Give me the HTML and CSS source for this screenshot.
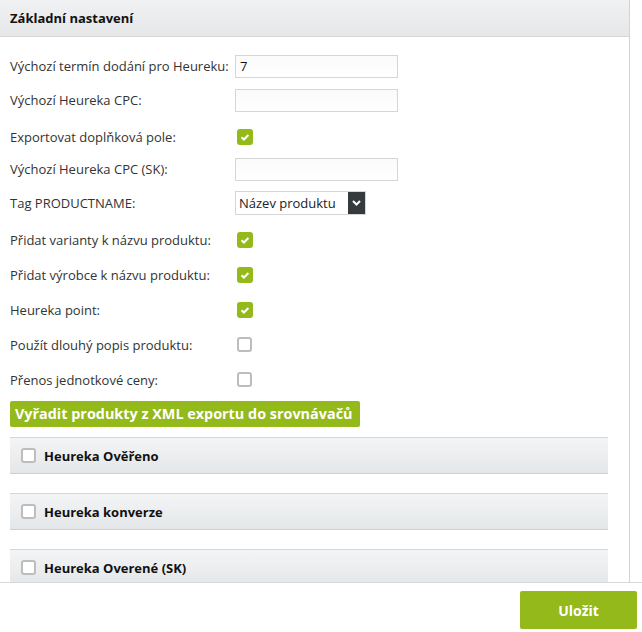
FILE: index.html
```html
<!DOCTYPE html>
<html lang="cs">
<head>
    <meta charset="UTF-8">
    <meta name="viewport" content="width=device-width, initial-scale=1.0">
    <title>Heureka - nastavení</title>
    <link rel="stylesheet" href="styles.css">
</head>
<body>
    <div class="scroll">
        <div class="panel">
            <div class="panel-head">Základní nastavení</div>

            <div class="panel-body">
                <div class="row">
                    <label>Výchozí termín dodání pro Heureku:</label>
                    <input type="text" class="field" value="7">
                </div>
                <div class="row">
                    <label>Výchozí Heureka CPC:</label>
                    <input type="text" class="field">
                </div>
                <div class="row check">
                    <label>Exportovat doplňková pole:</label>
                    <span class="box on"></span>
                </div>
                <div class="row">
                    <label>Výchozí Heureka CPC (SK):</label>
                    <input type="text" class="field">
                </div>
                <div class="row">
                    <label>Tag PRODUCTNAME:</label>
                    <div class="select">
                        <span class="select-value">Název produktu</span>
                        <span class="select-arrow">
                            <svg width="9" height="6" viewBox="0 0 9 6"><path d="M1 1l3.5 3.5L8 1" fill="none" stroke="#fff" stroke-width="2"/></svg>
                        </span>
                    </div>
                </div>
                <div class="row check">
                    <label>Přidat varianty k názvu produktu:</label>
                    <span class="box on"></span>
                </div>
                <div class="row check">
                    <label>Přidat výrobce k názvu produktu:</label>
                    <span class="box on"></span>
                </div>
                <div class="row check">
                    <label>Heureka point:</label>
                    <span class="box on"></span>
                </div>
                <div class="row check">
                    <label>Použít dlouhý popis produktu:</label>
                    <span class="box"></span>
                </div>
                <div class="row check">
                    <label>Přenos jednotkové ceny:</label>
                    <span class="box"></span>
                </div>

                <div class="banner">Vyřadit produkty z XML exportu do srovnávačů</div>

                <div class="item"><span class="box"></span>Heureka Ověřeno</div>
                <div class="item"><span class="box"></span>Heureka konverze</div>
                <div class="item"><span class="box"></span>Heureka Overené (SK)</div>
            </div>
        </div>
    </div>

    <div class="footer">
        <button type="button" class="save">Uložit</button>
    </div>
</body>
</html>
```

FILE: styles.css
```css
body {
    font-family: "Open Sans", Arial, sans-serif;
    font-size: 13px;
    color: #333;
    margin: 0;
    background: #fff;
}

.scroll {
    height: 582px;
    overflow: hidden;
}

.panel {
    width: 629px;
    border-right: 1px solid #d3d3d3;
    min-height: 582px;
}

.panel-head {
    height: 36px;
    line-height: 36px;
    padding-left: 10px;
    font-weight: bold;
    color: #111;
    background: linear-gradient(#f0f1f2, #e5e7e9);
    border-bottom: 1px solid #d4d6d8;
}

.panel-body {
    padding: 12px 0 0 10px;
}

.row {
    display: flex;
    align-items: center;
    height: 34px;
}

.row.check {
    height: 35px;
    box-sizing: border-box;
    padding-top: 4px;
}

.row label {
    width: 225px;
    flex: none;
}

.field {
    width: 163px;
    height: 23px;
    box-sizing: border-box;
    border: 1px solid #d6d6d6;
    background: linear-gradient(#fafafa, #fff);
    font-family: inherit;
    font-size: 13px;
    color: #111;
    padding: 0 4px;
    outline: none;
}

.select {
    display: flex;
    width: 131px;
    height: 24px;
    box-sizing: border-box;
    border: 1px solid #d6d6d6;
    color: #222;
}

.select-value {
    flex: 1;
    line-height: 22px;
    padding-left: 3px;
}

.select-arrow {
    width: 17px;
    background: #353a3d;
    display: flex;
    align-items: center;
    justify-content: center;
}

.box {
    width: 15px;
    height: 15px;
    box-sizing: border-box;
    border: 2px solid #bdbdbd;
    border-radius: 3px;
    background: #fff;
    margin-left: 2px;
    flex: none;
}

.box.on {
    width: 16px;
    height: 16px;
    border: none;
    background: #93b91b url("data:image/svg+xml,%3Csvg xmlns='http://www.w3.org/2000/svg' width='16' height='16'%3E%3Cpath d='M4.5 8.2l2.4 2.3 4.5-4.5' fill='none' stroke='white' stroke-width='2'/%3E%3C/svg%3E") no-repeat center;
}

.banner {
    display: inline-block;
    box-sizing: border-box;
    margin-top: 6px;
    height: 26px;
    line-height: 26px;
    padding: 0 5px;
    width: 350px;
    white-space: nowrap;
    background: #93b91b;
    color: #fff;
    font-weight: bold;
    font-size: 14.4px;
    border-radius: 2px;
}

.item {
    display: flex;
    align-items: center;
    gap: 8px;
    width: 587px;
    height: 35px;
    margin-top: 10px;
    margin-bottom: 9px;
    padding-left: 11px;
    border-top: 1px solid #d4d6d8;
    border-bottom: 1px solid #cdd0d2;
    background: linear-gradient(#f3f4f5, #e4e7e9);
    font-weight: bold;
    color: #111;
}

.item + .item {
    margin-top: 19px;
}

.item .box {
    margin: 0;
}

.footer {
    border-top: 1px solid #d8d8d8;
    display: flex;
    justify-content: flex-end;
    padding: 8px 5px 0 0;
}

.save {
    width: 117px;
    height: 38px;
    border: none;
    border-radius: 2px;
    background: #93b91b;
    color: #fff;
    font-family: inherit;
    font-weight: bold;
    font-size: 14px;
    cursor: pointer;
}
```
